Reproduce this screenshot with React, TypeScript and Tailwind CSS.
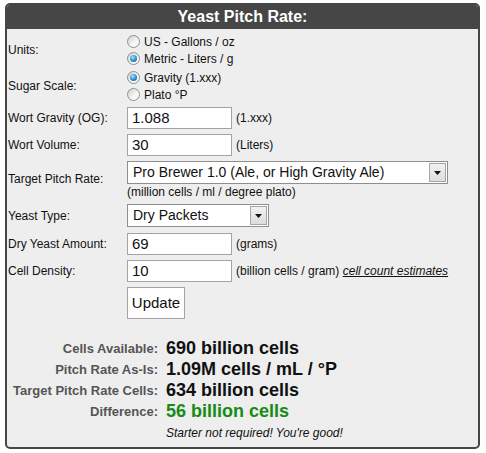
import React from "react";

function Radio({ checked }: { checked?: boolean }) {
  return (
    <span className="relative inline-flex w-[13px] h-[13px] rounded-full border border-[#8e8f8f] bg-[linear-gradient(135deg,#cfcfcf,#f6f6f6_60%,#ffffff)] items-center justify-center shrink-0">
      {checked && (
        <span className="w-[7px] h-[7px] rounded-full bg-[radial-gradient(circle_at_40%_35%,#a8e6ff,#2a8ad0_55%,#0d4f8f)]" />
      )}
    </span>
  );
}

function Arrow() {
  return (
    <span className="w-[17px] self-stretch my-[1px] mr-[1px] border border-[#a6a6a6] bg-[linear-gradient(#f2f2f2,#dcdcdc)] flex items-center justify-center">
      <svg width="7" height="4" viewBox="0 0 7 4">
        <path d="M0 0H7L3.5 4Z" fill="#111" />
      </svg>
    </span>
  );
}

export default function App() {
  const font = "font-['Liberation_Sans',Arial,sans-serif]";
  return (
    <div className={`w-[486px] h-[453px] bg-white pt-[3px] pl-[5px] ${font} text-[#111]`}>
      <div className="w-[475px] h-[446px] border-2 border-[#464646] rounded-[5px] bg-[#eeeeee] overflow-hidden flex flex-col">
        <div className="h-[24px] bg-[#464646] text-white font-bold text-[16px] flex items-center justify-center">
          Yeast Pitch Rate:
        </div>
        <div className="flex flex-col pl-[1px] text-[12px]">
          {/* Units */}
          <div className="flex items-center mt-[4px]">
            <div className="w-[119px]">Units:</div>
            <div className="flex flex-col">
              <label className="h-[17px] flex items-center gap-[4px]">
                <Radio /> US - Gallons / oz
              </label>
              <label className="h-[17px] flex items-center gap-[4px]">
                <Radio checked /> Metric - Liters / g
              </label>
            </div>
          </div>
          {/* Sugar */}
          <div className="flex items-center mt-[2px]">
            <div className="w-[119px]">Sugar Scale:</div>
            <div className="flex flex-col">
              <label className="h-[17px] flex items-center gap-[4px]">
                <Radio checked /> Gravity (1.xxx)
              </label>
              <label className="h-[17px] flex items-center gap-[4px]">
                <Radio /> Plato °P
              </label>
            </div>
          </div>
          {/* Wort gravity */}
          <div className="flex items-center mt-[4px] h-[22px]">
            <div className="w-[119px]">Wort Gravity (OG):</div>
            <div className="w-[105px] h-[22px] border border-[#a3a3a3] bg-white text-[15px] pl-[4px] flex items-center">1.088</div>
            <div className="ml-[4px]">(1.xxx)</div>
          </div>
          {/* Wort volume */}
          <div className="flex items-center mt-[5px] h-[22px]">
            <div className="w-[119px]">Wort Volume:</div>
            <div className="w-[105px] h-[22px] border border-[#a3a3a3] bg-white text-[15px] pl-[4px] flex items-center">30</div>
            <div className="ml-[4px]">(Liters)</div>
          </div>
          {/* Target pitch rate */}
          <div className="flex mt-[5px]">
            <div className="w-[119px] h-[23px] flex items-center mt-[6px]">Target Pitch Rate:</div>
            <div className="flex flex-col">
              <div className="w-[321px] h-[23px] border border-[#8f8f8f] bg-white flex items-stretch">
                <span className="flex-1 text-[14px] pl-[5px] flex items-center">Pro Brewer 1.0 (Ale, or High Gravity Ale)</span>
                <Arrow />
              </div>
              <div className="h-[14px] leading-[14px] mt-[1px]">(million cells / ml / degree plato)</div>
            </div>
          </div>
          {/* Yeast type */}
          <div className="flex items-center mt-[5px] h-[23px]">
            <div className="w-[119px]">Yeast Type:</div>
            <div className="w-[142px] h-[23px] border border-[#8f8f8f] bg-white flex items-stretch">
              <span className="flex-1 text-[14px] pl-[5px] flex items-center">Dry Packets</span>
              <Arrow />
            </div>
          </div>
          {/* Dry yeast amount */}
          <div className="flex items-center mt-[6px] h-[22px]">
            <div className="w-[119px]">Dry Yeast Amount:</div>
            <div className="w-[105px] h-[22px] border border-[#a3a3a3] bg-white text-[15px] pl-[4px] flex items-center">69</div>
            <div className="ml-[4px]">(grams)</div>
          </div>
          {/* Cell density */}
          <div className="flex items-center mt-[5px] h-[22px]">
            <div className="w-[119px]">Cell Density:</div>
            <div className="w-[105px] h-[22px] border border-[#a3a3a3] bg-white text-[15px] pl-[4px] flex items-center">10</div>
            <div className="ml-[4px]">
              (billion cells / gram) <span className="italic underline">cell count estimates</span>
            </div>
          </div>
          {/* Update */}
          <div className="flex mt-[5px]">
            <div className="w-[119px]" />
            <div className="w-[58px] h-[32px] border border-[#a3a3a3] bg-white text-[15px] flex items-center justify-center">Update</div>
          </div>
        </div>
        {/* Results */}
        <div className="flex flex-col mt-[19px]">
          {[
            ["Cells Available:", "690 billion cells", "text-[#111]"],
            ["Pitch Rate As-Is:", "1.09M cells / mL / °P", "text-[#111]"],
            ["Target Pitch Rate Cells:", "634 billion cells", "text-[#111]"],
            ["Difference:", "56 billion cells", "text-[#178a17]"],
          ].map(([l, v, c]) => (
            <div key={l} className="flex items-center h-[21px]">
              <div className="w-[151px] text-right font-bold text-[13px] text-[#555]">{l}</div>
              <div className={`ml-[8px] font-bold text-[18px] ${c}`}>{v}</div>
            </div>
          ))}
          <div className="flex items-center h-[21px]">
            <div className="w-[151px]" />
            <div className="ml-[8px] italic text-[12px]">Starter not required! You're good!</div>
          </div>
        </div>
      </div>
    </div>
  );
}
